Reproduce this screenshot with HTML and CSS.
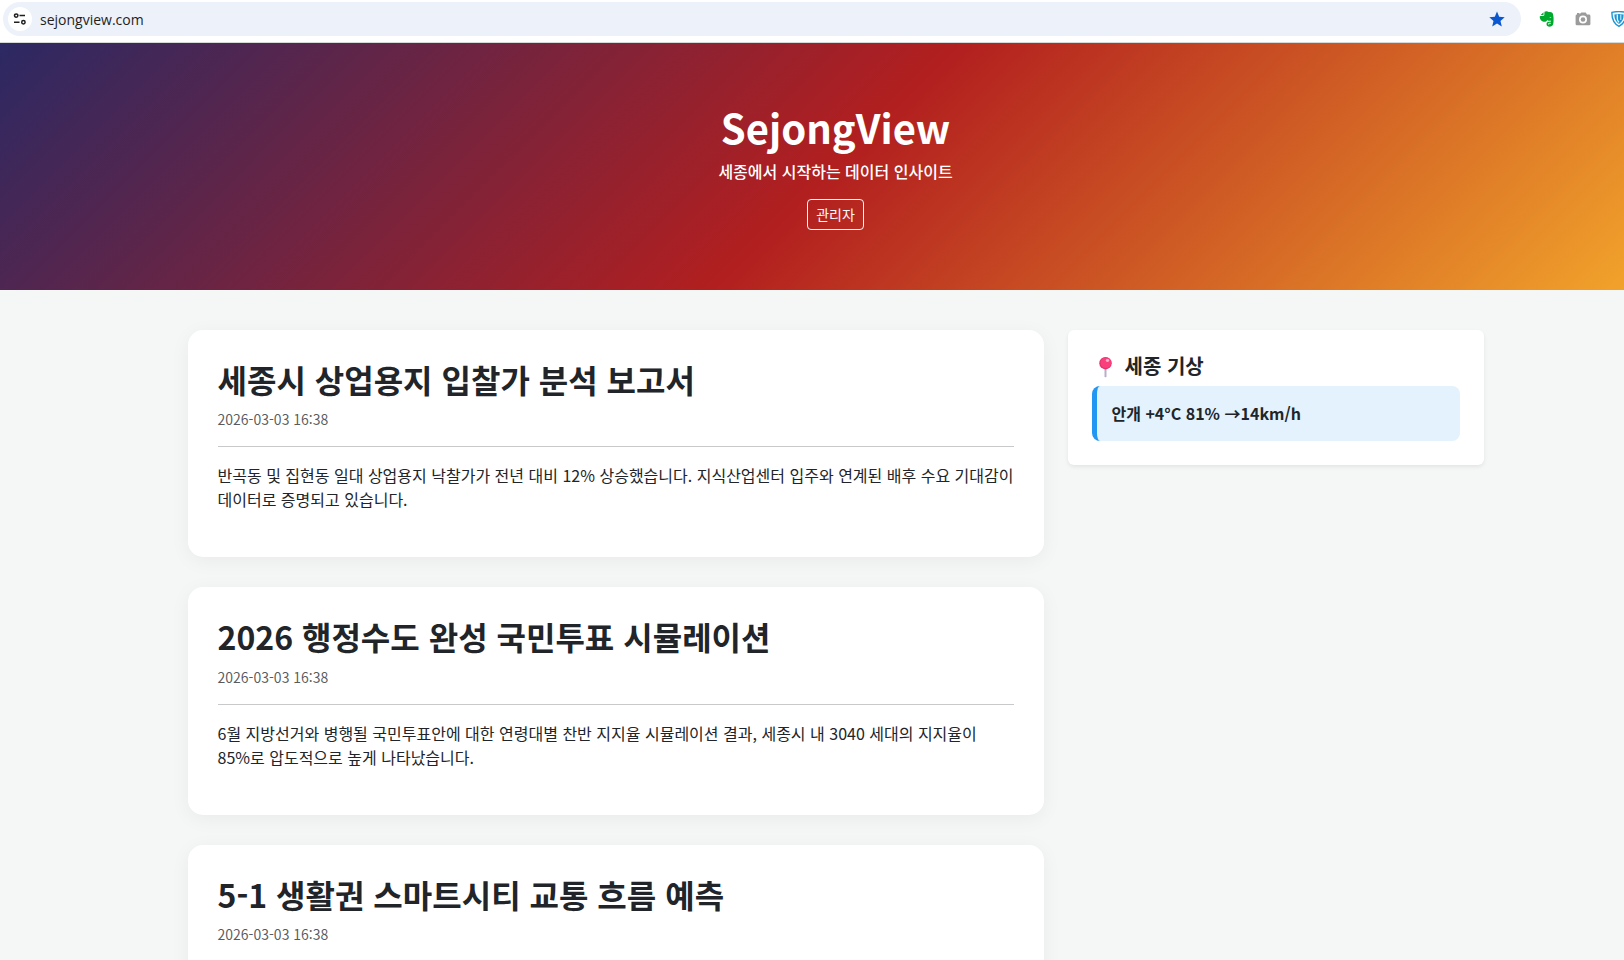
FILE: index.html
```html
<!DOCTYPE html>
<html lang="ko">
<head>
<meta charset="utf-8">
<title>SejongView</title>
<link rel="stylesheet" href="styles.css">
</head>
<body>
<div class="toolbar">
  <div class="omnibox">
    <button class="site-info" type="button" aria-label="사이트 정보">
      <svg width="14" height="14" viewBox="0 0 14 14" fill="none" stroke="#1f1f1f" stroke-width="1.5"><circle cx="3.2" cy="3.6" r="1.7"/><path d="M6.5 3.6H12M1 10.2h5.5"/><circle cx="10.4" cy="10.2" r="1.7"/></svg>
    </button>
    <input class="address" type="text" aria-label="주소" value="sejongview.com">
    <button class="icon-button" type="button" aria-label="북마크">
      <svg width="16" height="16" viewBox="0 0 16 16" fill="#0b57d0"><path d="M8 .5l2.200 5.200 5.500.5-4.200 3.700 1.300 5.500L8 12.500l-4.800 2.900 1.300-5.500L.3 6.200l5.500-.5z"/></svg>
    </button>
  </div>
  <div class="extensions">
    <button class="icon-button" type="button" aria-label="Evernote">
      <svg width="16" height="16" viewBox="0 0 16 16"><path fill="#00a82d" d="M5.500.8C6.600 0 8.600 0 9.600 1c1.800.1 3.800.3 4.200 1.500.9 2.600 1 6.500.6 9.600-.3 2.300-1.400 3.600-3.600 3.600-2.200 0-3.300-1-3.300-2.700 0-1.500 1-2.300 2.700-2.300h1.600V9.600c-1.400.5-2.900.3-3.500-.6-.6 1.400-1.900 2-3.600 1.700C2.600 10.300.9 8.600.7 5.900c0-.7.3-1 .9-1h2.900c.6 0 .8-.3.8-.8zM4.500 1.300v2.600H1.700z"/><path d="M10.400 6.200c.8-.5 1.700-.2 1.900.7z" fill="#fff"/><path d="M11.800 12.300h-1.700c-.9 0-.9 1.300 0 1.300" fill="none" stroke="#fff" stroke-width=".9"/></svg>
    </button>
    <button class="icon-button" type="button" aria-label="캡처">
      <svg width="16" height="16" viewBox="0 0 16 16"><path fill="#9b9b9b" fill-rule="evenodd" d="M2 3.500V2h2.500v1.200L6.300 1.500h4.400L12 3.500h2a1.400 1.400 0 0 1 1.400 1.400v8A1.400 1.400 0 0 1 14 14.300H2A1.400 1.400 0 0 1 .6 12.900v-8A1.400 1.400 0 0 1 2 3.500zM8 4.500a4 4 0 1 0 0 8 4 4 0 0 0 0-8z"/><circle cx="8" cy="8.500" r="2.300" fill="#9b9b9b"/></svg>
    </button>
    <button class="icon-button" type="button" aria-label="보안">
      <svg width="16" height="16" viewBox="0 0 16 16"><path d="M.9 1.400Q8-.2 15.100 1.400 15.300 11.500 8 15.300.7 11.500.9 1.400z" fill="#fff" stroke="#1e96d2" stroke-width="1.400"/><path d="M3.300 3.400Q8 2.600 12.700 3.400 12.600 10 8 13 3.400 10 3.300 3.400z" fill="#1e96d2"/><path d="M6.300 3.500v4.300Q6.500 10 8 11.300" stroke="#fff" stroke-width="1.200" fill="none"/><path d="M9.800 3.500v5.500" stroke="#d7effa" fill="none"/></svg>
    </button>
  </div>
</div>
<div class="page">
  <header class="hero">
    <h1 class="hero-title">SejongView</h1>
    <p class="hero-text">세종에서 시작하는 데이터 인사이트</p>
    <a class="admin-link" href="#">관리자</a>
  </header>
  <div class="container">
    <main class="posts">
      <article class="post">
        <h2 class="post-title">세종시 상업용지 입찰가 분석 보고서</h2>
        <time class="post-date">2026-03-03 16:38</time>
        <hr class="rule">
        <p class="post-body">반곡동 및 집현동 일대 상업용지 낙찰가가 전년 대비 12% 상승했습니다. 지식산업센터 입주와 연계된 배후 수요 기대감이 데이터로 증명되고 있습니다.</p>
      </article>
      <article class="post">
        <h2 class="post-title">2026 행정수도 완성 국민투표 시뮬레이션</h2>
        <time class="post-date">2026-03-03 16:38</time>
        <hr class="rule">
        <p class="post-body">6월 지방선거와 병행될 국민투표안에 대한 연령대별 찬반 지지율 시뮬레이션 결과, 세종시 내 3040 세대의 지지율이 85%로 압도적으로 높게 나타났습니다.</p>
      </article>
      <article class="post">
        <h2 class="post-title">5-1 생활권 스마트시티 교통 흐름 예측</h2>
        <time class="post-date">2026-03-03 16:38</time>
        <hr class="rule">
      </article>
    </main>
    <aside class="widget">
      <h5 class="widget-title">
        <svg class="pin" width="28" height="24" viewBox="0 0 28 24"><path d="M12.500 13h2v9.500l-1 1-1-1z" fill="#b9adc9"/><circle cx="13.500" cy="9.200" r="6.200" fill="#e2316c"/><circle cx="13.800" cy="8.700" r="5.400" fill="#f9407c"/><ellipse cx="15.500" cy="6.500" rx="1.700" ry="1.400" fill="#ffb0cb"/></svg>
        세종 기상
      </h5>
      <div class="weather">안개 +4°C 81% →14km/h</div>
    </aside>
  </div>
</div>
</body>
</html>
```
FILE: styles.css
```css
*, *::before, *::after { box-sizing: border-box; }

html { overflow: hidden; }

body {
  margin: 0;
  background: #f4f7f6;
  color: #212529;
  font-family: "Noto Sans CJK KR", "Noto Sans", sans-serif;
  font-size: 16px;
  line-height: 1.5;
}

.toolbar {
  display: flex;
  gap: 18px;
  height: 43px;
  padding: 2px 0 6px 3px;
  overflow: hidden;
  background: #fff;
  border-bottom: 1px solid #d5dad9;
}

.omnibox {
  display: flex;
  flex: 1;
  align-items: center;
  padding: 0 16px 0 5px;
  border-radius: 17px;
  background: #ecf1fa;
}

.site-info {
  display: grid;
  place-items: center;
  width: 24px;
  height: 24px;
  padding: 0;
  border: 0;
  border-radius: 50%;
  background: #fff;
}

.address {
  flex: 1;
  padding: 0 8px;
  border: 0;
  outline: 0;
  background: transparent;
  color: #1f1f1f;
  font-family: "Open Sans", sans-serif;
  font-size: 14px;
}

.icon-button {
  display: grid;
  place-items: center;
  padding: 0;
  border: 0;
  background: transparent;
}

.extensions {
  display: flex;
  gap: 20px;
  margin-right: -3px;
}

/* The page is wider than the window and runs past its right edge. */
.page { width: calc(100% + 47px); }

.hero {
  padding: 60px 0;
  background: linear-gradient(135deg, #1a2a6c -6.5%, #b21f1f 50%, #fdbb2d 106.5%);
  color: #fff;
  text-align: center;
}

.hero-title {
  margin: 0 0 8px;
  font-size: 40px;
  font-weight: 700;
  line-height: 1.2;
}

.hero-text {
  margin: 0 0 16px;
  font-weight: 500;
}

.admin-link {
  display: block;
  width: fit-content;
  margin: 0 auto;
  padding: 4px 8px;
  border: 1px solid #f8f9fa;
  border-radius: 4px;
  color: #f8f9fa;
  font-size: 14px;
  text-decoration: none;
}

.container {
  display: grid;
  grid-template-columns: minmax(0, 856fr) minmax(0, 416fr);
  gap: 24px;
  align-items: start;
  max-width: 1320px;
  margin: 40px auto 0;
  padding: 0 12px;
}

.post {
  margin-bottom: 30px;
  padding: 30px;
  border-radius: 15px;
  background: #fff;
  box-shadow: 0 4px 20px rgba(0, 0, 0, 0.05);
}

.post-title {
  margin: 0 0 8px;
  font-size: 32px;
  font-weight: 700;
  line-height: 1.2;
}

.post-date {
  color: rgba(33, 37, 41, 0.75);
  font-size: 14px;
}

.rule {
  margin: 16px 0;
  border: 0;
  border-top: 1px solid #c8c9ca;
}

.post-body { margin: 0 0 16px; }

.widget {
  padding: 24px;
  border-radius: 6px;
  background: #fff;
  box-shadow: 0 2px 4px rgba(0, 0, 0, 0.075);
}

.widget-title {
  display: flex;
  gap: 5px;
  margin: 0 0 8px;
  font-size: 20px;
  font-weight: 700;
  line-height: 1.2;
}

.weather {
  padding: 15px;
  border-left: 5px solid #2196f3;
  border-radius: 8px;
  background: #e3f2fd;
  font-weight: 700;
  line-height: 25px;
}
```
